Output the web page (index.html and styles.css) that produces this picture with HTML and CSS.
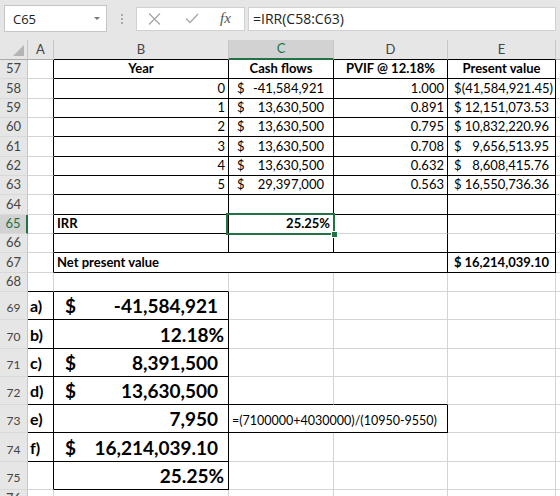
FILE: index.html
```html
<!DOCTYPE html>
<html lang="en">

<head>
    <meta charset="UTF-8">
    <meta name="viewport" content="width=device-width, initial-scale=1.0">
    <title>IRR worksheet</title>
    <link rel="stylesheet" href="styles.css">
</head>

<body>
    <div class="formula-bar">
        <div class="name-box">C65<span class="caret"></span></div>
        <div class="grip"><i></i><i></i><i></i></div>
        <div class="fx-box">
            <svg class="icon" width="13" height="12" viewBox="0 0 13 12"><path d="M1 0.5L12 11.5M12 0.5L1 11.5" /></svg>
            <svg class="icon check" width="14" height="11" viewBox="0 0 14 11"><path d="M1 5.5L5 9.5L13 1" /></svg>
            <span class="fx">fx</span>
        </div>
        <div class="formula">=IRR(C58:C63)</div>
    </div>

    <table class="sheet">
        <colgroup>
            <col class="w-rh">
            <col class="w-a">
            <col class="w-b">
            <col class="w-c">
            <col class="w-d">
            <col class="w-e">
            <col class="w-f">
        </colgroup>
        <thead>
            <tr class="head">
                <th class="hdr corner"><span class="tri"></span></th>
                <th class="hdr">A</th>
                <th class="hdr bb">B</th>
                <th class="hdr bb cur-col">C</th>
                <th class="hdr bb">D</th>
                <th class="hdr bb">E</th>
                <th class="hdr"></th>
            </tr>
        </thead>
        <tbody>
            <tr class="r">
                <th class="hdr rh">57</th>
                <td class="br"></td>
                <td class="b c br bb">Year</td>
                <td class="b c br bb">Cash flows</td>
                <td class="b c br bb">PVIF @ 12.18%</td>
                <td class="b c br bb">Present value</td>
                <td></td>
            </tr>
            <tr class="r">
                <th class="hdr rh">58</th>
                <td class="br"></td>
                <td class="num br bb">0</td>
                <td class="acct-c br bb"><span class="cur">$</span>-41,584,921</td>
                <td class="num br bb">1.000</td>
                <td class="acct-e br bb"><span class="cur">$</span>(41,584,921.45)</td>
                <td></td>
            </tr>
            <tr class="r">
                <th class="hdr rh">59</th>
                <td class="br"></td>
                <td class="num br bb">1</td>
                <td class="acct-c br bb"><span class="cur">$</span>13,630,500</td>
                <td class="num br bb">0.891</td>
                <td class="acct-e br bb"><span class="cur">$</span><span class="pos">12,151,073.53</span></td>
                <td></td>
            </tr>
            <tr class="r">
                <th class="hdr rh">60</th>
                <td class="br"></td>
                <td class="num br bb">2</td>
                <td class="acct-c br bb"><span class="cur">$</span>13,630,500</td>
                <td class="num br bb">0.795</td>
                <td class="acct-e br bb"><span class="cur">$</span><span class="pos">10,832,220.96</span></td>
                <td></td>
            </tr>
            <tr class="r">
                <th class="hdr rh">61</th>
                <td class="br"></td>
                <td class="num br bb">3</td>
                <td class="acct-c br bb"><span class="cur">$</span>13,630,500</td>
                <td class="num br bb">0.708</td>
                <td class="acct-e br bb"><span class="cur">$</span><span class="pos">9,656,513.95</span></td>
                <td></td>
            </tr>
            <tr class="r">
                <th class="hdr rh">62</th>
                <td class="br"></td>
                <td class="num br bb">4</td>
                <td class="acct-c br bb"><span class="cur">$</span>13,630,500</td>
                <td class="num br bb">0.632</td>
                <td class="acct-e br bb"><span class="cur">$</span><span class="pos">8,608,415.76</span></td>
                <td></td>
            </tr>
            <tr class="r">
                <th class="hdr rh">63</th>
                <td class="br"></td>
                <td class="num br bb">5</td>
                <td class="acct-c br bb"><span class="cur">$</span>29,397,000</td>
                <td class="num br bb">0.563</td>
                <td class="acct-e br bb"><span class="cur">$</span><span class="pos">16,550,736.36</span></td>
                <td></td>
            </tr>
            <tr class="r">
                <th class="hdr rh">64</th>
                <td class="br"></td>
                <td class="br bb"></td>
                <td class="br bb"></td>
                <td class="br bb"></td>
                <td class="br bb"></td>
                <td></td>
            </tr>
            <tr class="r">
                <th class="hdr rh cur-row">65</th>
                <td class="br"></td>
                <td class="b br bb">IRR</td>
                <td class="b num sel br bb">25.25%</td>
                <td class="br"></td>
                <td class="br"></td>
                <td></td>
            </tr>
            <tr class="r">
                <th class="hdr rh">66</th>
                <td class="br"></td>
                <td class="br bb"></td>
                <td class="br bb"></td>
                <td class="br bb"></td>
                <td class="br bb"></td>
                <td></td>
            </tr>
            <tr class="r">
                <th class="hdr rh">67</th>
                <td class="br"></td>
                <td class="b br bb" colspan="3">Net present value</td>
                <td class="b acct-e br bb"><span class="cur">$</span><span class="pos">16,214,039.10</span></td>
                <td></td>
            </tr>
            <tr class="r">
                <th class="hdr rh">68</th>
                <td class="bb"></td>
                <td class="bb"></td>
                <td></td>
                <td></td>
                <td></td>
                <td></td>
            </tr>
            <tr class="big">
                <th class="hdr rh">69</th>
                <td class="lab br bb">a)</td>
                <td class="amt br bb"><span class="cur">$</span>-41,584,921</td>
                <td></td>
                <td></td>
                <td></td>
                <td></td>
            </tr>
            <tr class="big">
                <th class="hdr rh">70</th>
                <td class="lab br bb">b)</td>
                <td class="pct br bb">12.18%</td>
                <td></td>
                <td></td>
                <td></td>
                <td></td>
            </tr>
            <tr class="big">
                <th class="hdr rh">71</th>
                <td class="lab br bb">c)</td>
                <td class="amt br bb"><span class="cur">$</span>8,391,500</td>
                <td></td>
                <td></td>
                <td></td>
                <td></td>
            </tr>
            <tr class="big">
                <th class="hdr rh">72</th>
                <td class="lab br bb">d)</td>
                <td class="amt br bb"><span class="cur">$</span>13,630,500</td>
                <td class="bb"></td>
                <td class="bb"></td>
                <td></td>
                <td></td>
            </tr>
            <tr class="big">
                <th class="hdr rh">73</th>
                <td class="lab br bb">e)</td>
                <td class="amt br bb">7,950</td>
                <td class="note br bb" colspan="2">=(7100000+4030000)/(10950-9550)</td>
                <td></td>
                <td></td>
            </tr>
            <tr class="big">
                <th class="hdr rh">74</th>
                <td class="lab br bb">f)</td>
                <td class="amt br bb"><span class="cur">$</span>16,214,039.10</td>
                <td></td>
                <td></td>
                <td></td>
                <td></td>
            </tr>
            <tr class="big">
                <th class="hdr rh">75</th>
                <td class="br"></td>
                <td class="pct br bb">25.25%</td>
                <td></td>
                <td></td>
                <td></td>
                <td></td>
            </tr>
            <tr class="r">
                <th class="hdr rh">76</th>
                <td></td>
                <td></td>
                <td></td>
                <td></td>
                <td></td>
                <td></td>
            </tr>
        </tbody>
    </table>
</body>

</html>
```

FILE: styles.css
```css
body {
    margin: 0;
    width: 560px;
    height: 496px;
    overflow: hidden;
    background-color: #fff;
    color: #000;
    font-family: Lato, "Open Sans", sans-serif;
}

/* formula bar */

.formula-bar {
    display: flex;
    align-items: center;
    height: 40px;
    padding: 0 4px 3px 4px;
    box-sizing: border-box;
    background-color: #e6e6e6;
    font-family: "Open Sans", sans-serif;
}

.name-box {
    display: flex;
    align-items: center;
    justify-content: space-between;
    width: 103px;
    height: 27px;
    box-sizing: border-box;
    padding: 0 6px 0 8px;
    background-color: #fff;
    border: 1px solid #c6c6c6;
    font-size: 13px;
    color: #222;
}

.caret {
    border-left: 3px solid transparent;
    border-right: 3px solid transparent;
    border-top: 3px solid #777;
}

.grip {
    display: flex;
    flex-direction: column;
    gap: 2px;
    margin: 0 13px 0 14px;
}

.grip i {
    width: 2px;
    height: 2px;
    background-color: #aaa;
}

.fx-box {
    display: flex;
    align-items: center;
    width: 109px;
    height: 24px;
    box-sizing: border-box;
    padding-left: 11px;
    background-color: #fff;
    border: 1px solid #d0d0d0;
}

.icon {
    fill: none;
    stroke: #a6a6a6;
    stroke-width: 1.3;
}

.check {
    margin-left: 24px;
}

.fx {
    margin-left: 21px;
    font-family: "Liberation Serif", serif;
    font-style: italic;
    font-size: 15px;
    color: #555;
}

.formula {
    flex: 1;
    height: 24px;
    box-sizing: border-box;
    margin-left: 3px;
    padding-left: 4px;
    background-color: #fff;
    border: 1px solid #d0d0d0;
    font-size: 14px;
    line-height: 22px;
    color: #222;
}

/* grid */

.sheet {
    border-collapse: separate;
    border-spacing: 0;
    table-layout: fixed;
    width: 584px;
}

.w-rh { width: 28px; }
.w-a { width: 26px; }
.w-b { width: 175px; }
.w-c { width: 105px; }
.w-d { width: 114px; }
.w-e { width: 108px; }
.w-f { width: 28px; }

.head { height: 20px; }
.r { height: 19.33px; }
.big { height: 28.3px; }

td, th {
    padding: 0 3px 2px;
    border-right: 1px solid #d4d4d4;
    border-bottom: 1px solid #d4d4d4;
    font-size: 13px;
    line-height: 16px;
    vertical-align: bottom;
    white-space: nowrap;
    text-align: left;
}

.hdr {
    padding: 0 0 2px;
    background-color: #e6e6e6;
    border-right-color: #c6c6c6;
    border-bottom-color: #ababab;
    color: #444;
    font-weight: 400;
    text-align: center;
}

.rh {
    border-bottom-color: #d9d9d9;
}

.bb { border-bottom-color: #000; }
.br { border-right-color: #000; }

.cur-col {
    background-color: #d2d2d2;
    color: #217346;
    border-bottom: 2px solid #217346;
}

.cur-row {
    background-color: #d2d2d2;
    color: #217346;
    border-right: 2px solid #217346;
}

.corner .tri {
    display: block;
    width: 0;
    height: 0;
    margin: 0 3px 1px auto;
    border-left: 11px solid transparent;
    border-bottom: 11px solid #b4b4b4;
}

.b { font-weight: 700; }
.c { text-align: center; }
.num { text-align: right; }

.cur { float: left; }

.acct-c {
    padding: 0 9px 2px 8px;
    text-align: right;
}

.acct-e {
    padding: 0 2px 2px 6px;
    text-align: right;
}

.pos { padding-right: 4px; }

/* selected cell */

.sel {
    position: relative;
    padding-right: 3px;
}

.sel::before {
    content: "";
    position: absolute;
    left: -3px;
    top: -2px;
    right: -2px;
    bottom: -2px;
    border: 2px solid #217346;
}

.sel::after {
    content: "";
    position: absolute;
    right: -5px;
    bottom: -5px;
    width: 5px;
    height: 5px;
    background-color: #217346;
    border: 1px solid #fff;
}

/* answers block */

.big td {
    font-size: 19px;
    line-height: 22px;
    font-weight: 700;
}

.big .rh {
    font-size: 12px;
    line-height: 14px;
    padding-bottom: 4px;
}

.big .lab {
    padding-left: 2px;
    font-size: 16px;
}

.big .amt {
    padding: 0 10px 2px 11px;
    text-align: right;
}

.big .pct {
    padding-right: 4px;
    text-align: right;
}

.big .note {
    padding: 0 3px 4px;
    font-size: 12.5px;
    line-height: 15px;
    font-weight: 400;
}
```
